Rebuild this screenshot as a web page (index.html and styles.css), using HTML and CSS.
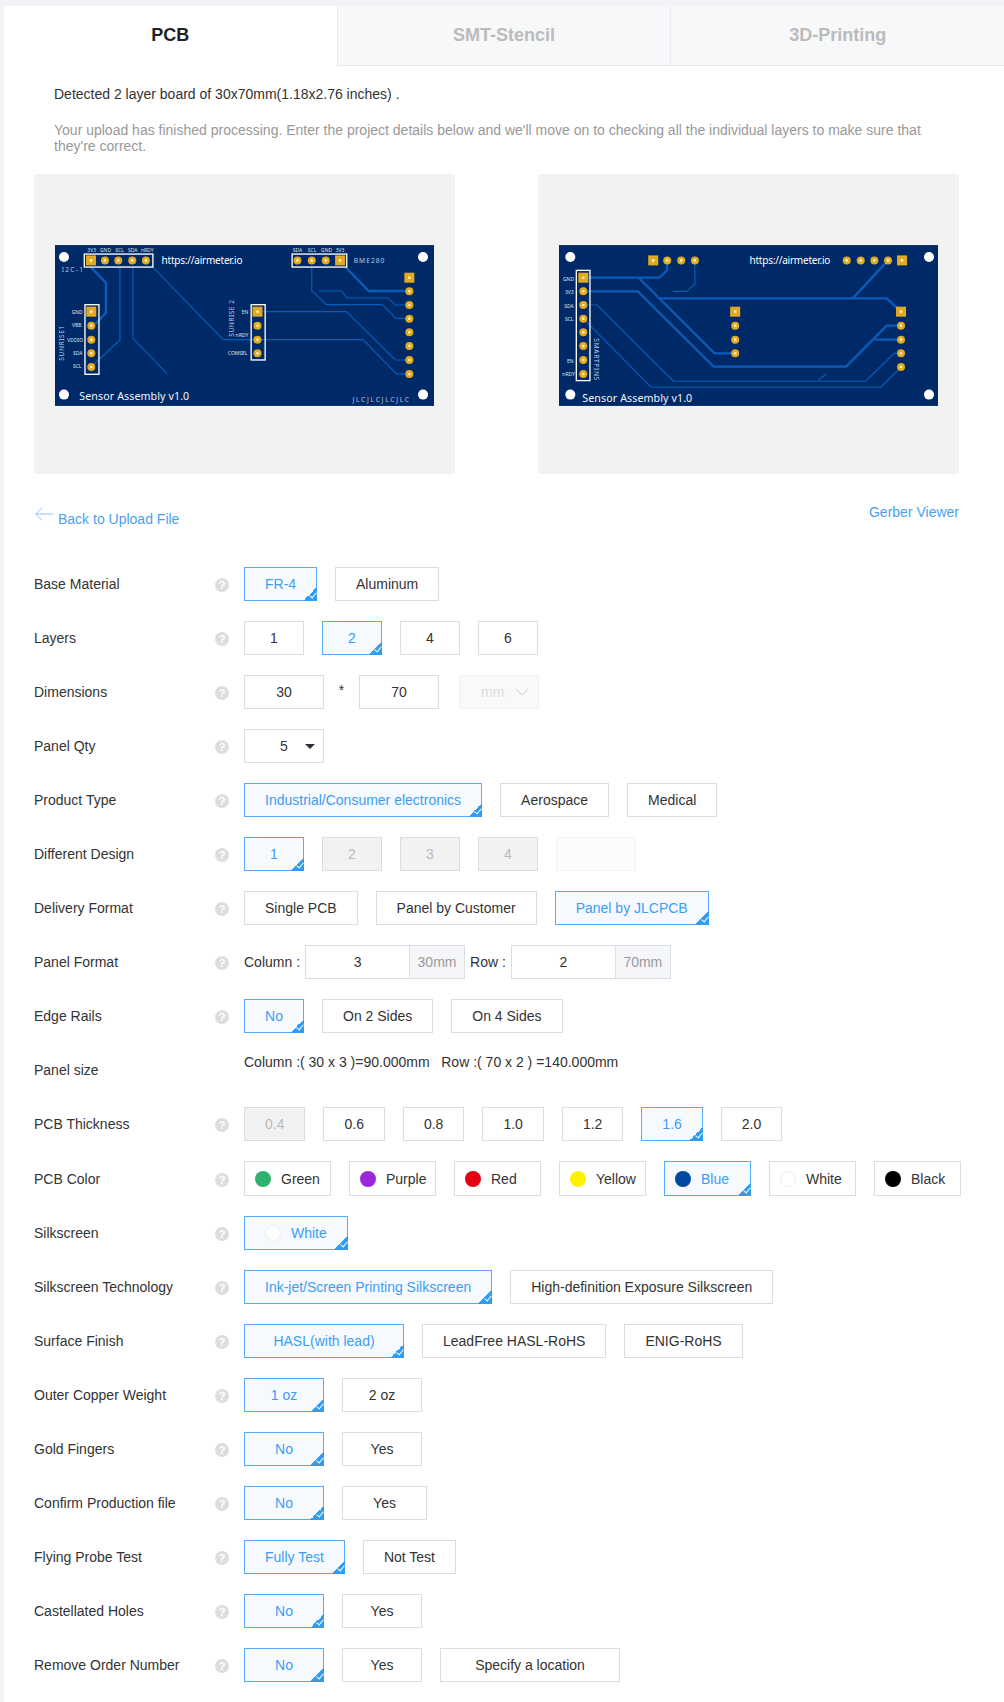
FILE: index.html
```html
<!DOCTYPE html>
<html lang="en">
<head>
  <meta charset="UTF-8" />
  <title>PCB Order</title>
  <link rel="stylesheet" href="styles.css">
</head>
<body>
  <div class="page">
    <div class="tabs">
      <div class="tab active">PCB</div>
      <div class="tab">SMT-Stencil</div>
      <div class="tab">3D-Printing</div>
    </div>

    <div class="intro">
      <p class="detected">Detected 2 layer board of 30x70mm(1.18x2.76 inches) .</p>
      <p class="note">Your upload has finished processing. Enter the project details below and we'll move on to checking all the individual layers to make sure that they're correct.</p>
    </div>

    <div class="previews">
      <div class="preview">
        <svg class="board" viewBox="75 45 1138 483">
          <rect class="pcb" x="75" y="45" width="1138" height="483"/>
          <path class="trace" d="M183 112 L228 158 V248 L196 282 M948 112 L1017 183 H1139"/>
          <path class="trace-thin" d="M270 111 V330 L190 405 M309 111 V325 L412 432 M370 113 L580 329 H1000 L1100 432 H1139 M846 111 V182 L890 224 H1058 L1098 265 H1139 M868 183 H935 L952 204 H1075 L1097 225 H1139 M700 245 H950 L1097 390 H1139"/>
          <g class="hole">
            <circle cx="102" cy="81" r="15"/><circle cx="1180" cy="81" r="15"/>
            <circle cx="102" cy="494" r="15"/><circle cx="1180" cy="494" r="15"/>
          </g>
          <g class="silk">
            <rect x="163" y="72" width="206" height="39"/><rect x="787" y="72" width="164" height="39"/>
            <rect x="165" y="224" width="42" height="209"/><rect x="664" y="224" width="42" height="166"/>
          </g>
          <g class="pad">
            <rect x="168" y="76" width="30" height="30"/><rect x="916" y="76" width="30" height="30"/>
            <rect x="169" y="230" width="30" height="30"/><rect x="668" y="230" width="30" height="30"/>
            <rect x="1124" y="128" width="30" height="30"/>
            <circle cx="225" cy="91" r="12"/><circle cx="265" cy="91" r="12"/><circle cx="307" cy="91" r="12"/><circle cx="348" cy="91" r="12"/>
            <circle cx="803" cy="91" r="12"/><circle cx="846" cy="91" r="12"/><circle cx="888" cy="91" r="12"/>
            <circle cx="184" cy="287" r="12"/><circle cx="184" cy="329" r="12"/><circle cx="184" cy="370" r="12"/><circle cx="184" cy="411" r="12"/>
            <circle cx="683" cy="287" r="12"/><circle cx="683" cy="329" r="12"/><circle cx="683" cy="370" r="12"/>
            <circle cx="1139" cy="184" r="12"/><circle cx="1139" cy="225" r="12"/><circle cx="1139" cy="266" r="12"/><circle cx="1139" cy="307" r="12"/><circle cx="1139" cy="348" r="12"/><circle cx="1139" cy="390" r="12"/><circle cx="1139" cy="432" r="12"/>
          </g>
          <g class="drill">
            <circle cx="183" cy="91" r="4"/><circle cx="225" cy="91" r="4"/><circle cx="265" cy="91" r="4"/><circle cx="307" cy="91" r="4"/><circle cx="348" cy="91" r="4"/>
            <circle cx="803" cy="91" r="4"/><circle cx="846" cy="91" r="4"/><circle cx="888" cy="91" r="4"/><circle cx="931" cy="91" r="4"/>
            <circle cx="184" cy="245" r="4"/><circle cx="184" cy="287" r="4"/><circle cx="184" cy="329" r="4"/><circle cx="184" cy="370" r="4"/><circle cx="184" cy="411" r="4"/>
            <circle cx="683" cy="245" r="4"/><circle cx="683" cy="287" r="4"/><circle cx="683" cy="329" r="4"/><circle cx="683" cy="370" r="4"/>
            <circle cx="1139" cy="143" r="4"/><circle cx="1139" cy="184" r="4"/><circle cx="1139" cy="225" r="4"/><circle cx="1139" cy="266" r="4"/><circle cx="1139" cy="307" r="4"/><circle cx="1139" cy="348" r="4"/><circle cx="1139" cy="390" r="4"/><circle cx="1139" cy="432" r="4"/>
          </g>
          <g class="tiny">
            <text x="172" y="66">3V3</text><text x="210" y="66">GND</text><text x="256" y="66">SCL</text><text x="294" y="66">SDA</text><text x="333" y="66">nRDY</text>
            <text x="789" y="66">SDA</text><text x="834" y="66">SCL</text><text x="874" y="66">GND</text><text x="918" y="66">3V3</text>
            <text x="125" y="251">GND</text><text x="126" y="292">VBB</text><text x="112" y="335">VDDIO</text><text x="129" y="376">SDA</text><text x="129" y="415">SCL</text>
            <text x="636" y="253">EN</text><text x="618" y="321">nRDY</text><text x="594" y="375">COMSEL</text>
          </g>
          <text class="url" x="395" y="102" textLength="243">https://airmeter.io</text>
          <text class="ref" x="972" y="100" textLength="92">BME280</text>
          <text class="ref" x="95" y="127" textLength="64">I2C-1</text>
          <text class="ref" transform="translate(103 392) rotate(-90)" textLength="105">SUNRISE1</text>
          <text class="ref" transform="translate(612 320) rotate(-90)" textLength="110">SUNRISE 2</text>
          <text class="title" x="148" y="511" textLength="330">Sensor Assembly v1.0</text>
          <text class="ref" x="968" y="515" textLength="170">JLCJLCJLCJLC</text>
        </svg>
      </div>
      <div class="preview">
        <svg class="board" viewBox="26 45 1138 483">
          <rect class="pcb" x="26" y="45" width="1138" height="483"/>
          <path class="trace" d="M99 143 H328 L351 120 V91 M265 143 L493 370 H555 M99 184 H263 L490 410 H888 L1010 287 H1053 M975 329 H1053 M330 205 H1010 L1053 245 M908 205 L1014 91"/>
          <path class="trace-thin" d="M434 91 V162 L410 184 H368 M99 225 H140 L370 454 H947 L1032 370 H1053 M99 266 L303 472 H992 L1053 411 M805 450 L828 432"/>
          <g class="hole">
            <circle cx="60" cy="81" r="15"/><circle cx="1137" cy="81" r="15"/>
            <circle cx="60" cy="494" r="15"/><circle cx="1137" cy="494" r="15"/>
          </g>
          <g class="silk"><rect x="78" y="121" width="41" height="331"/></g>
          <g class="pad">
            <rect x="294" y="76" width="30" height="30"/><rect x="1041" y="76" width="30" height="30"/>
            <rect x="84" y="128" width="30" height="30"/><rect x="540" y="230" width="30" height="30"/><rect x="1038" y="230" width="30" height="30"/>
            <circle cx="351" cy="91" r="12"/><circle cx="393" cy="91" r="12"/><circle cx="434" cy="91" r="12"/>
            <circle cx="890" cy="91" r="12"/><circle cx="932" cy="91" r="12"/><circle cx="973" cy="91" r="12"/><circle cx="1014" cy="91" r="12"/>
            <circle cx="99" cy="184" r="12"/><circle cx="99" cy="225" r="12"/><circle cx="99" cy="266" r="12"/><circle cx="99" cy="307" r="12"/><circle cx="99" cy="348" r="12"/><circle cx="99" cy="390" r="12"/><circle cx="99" cy="432" r="12"/>
            <circle cx="555" cy="287" r="12"/><circle cx="555" cy="329" r="12"/><circle cx="555" cy="370" r="12"/>
            <circle cx="1053" cy="287" r="12"/><circle cx="1053" cy="329" r="12"/><circle cx="1053" cy="370" r="12"/><circle cx="1053" cy="411" r="12"/>
          </g>
          <g class="drill">
            <circle cx="309" cy="91" r="4"/><circle cx="351" cy="91" r="4"/><circle cx="393" cy="91" r="4"/><circle cx="434" cy="91" r="4"/>
            <circle cx="890" cy="91" r="4"/><circle cx="932" cy="91" r="4"/><circle cx="973" cy="91" r="4"/><circle cx="1014" cy="91" r="4"/><circle cx="1056" cy="91" r="4"/>
            <circle cx="99" cy="143" r="4"/><circle cx="99" cy="184" r="4"/><circle cx="99" cy="225" r="4"/><circle cx="99" cy="266" r="4"/><circle cx="99" cy="307" r="4"/><circle cx="99" cy="348" r="4"/><circle cx="99" cy="390" r="4"/><circle cx="99" cy="432" r="4"/>
            <circle cx="555" cy="245" r="4"/><circle cx="555" cy="287" r="4"/><circle cx="555" cy="329" r="4"/><circle cx="555" cy="370" r="4"/>
            <circle cx="1053" cy="245" r="4"/><circle cx="1053" cy="287" r="4"/><circle cx="1053" cy="329" r="4"/><circle cx="1053" cy="370" r="4"/><circle cx="1053" cy="411" r="4"/>
          </g>
          <g class="tiny">
            <text x="38" y="153">GND</text><text x="44" y="191">3V3</text><text x="42" y="233">SDA</text><text x="44" y="274">SCL</text><text x="50" y="400">EN</text><text x="36" y="438">nRDY</text>
          </g>
          <text class="url" x="598" y="102" textLength="243">https://airmeter.io</text>
          <text class="ref" transform="translate(130 325) rotate(90)" textLength="126">SMARTPINS</text>
          <text class="title" x="96" y="515" textLength="330">Sensor Assembly v1.0</text>
        </svg>
      </div>
    </div>

    <div class="links">
      <a class="back">
        <svg class="back-arrow" width="18" height="14" viewBox="0 0 18 14"><path d="M7 0.5 L0.8 7 L7 13.5 M1 7 H18"/></svg>
        <span>Back to Upload File</span>
      </a>
      <a class="gerber">Gerber Viewer</a>
    </div>

    <div class="form">
      <div class="row">
        <label>Base Material</label><i class="help">?</i>
        <div class="opts"><span class="opt on w73">FR-4</span><span class="opt">Aluminum</span></div>
      </div>
      <div class="row">
        <label>Layers</label><i class="help">?</i>
        <div class="opts"><span class="opt">1</span><span class="opt on">2</span><span class="opt">4</span><span class="opt">6</span></div>
      </div>
      <div class="row">
        <label>Dimensions</label><i class="help">?</i>
        <div class="opts dims">
          <span class="opt w80">30</span><span class="times">*</span><span class="opt w80">70</span>
          <span class="unit">mm<svg width="12" height="7" viewBox="0 0 12 7"><path d="M0.5 0.5 L6 6 L11.5 0.5"/></svg></span>
        </div>
      </div>
      <div class="row">
        <label>Panel Qty</label><i class="help">?</i>
        <div class="opts"><span class="opt w80 select">5</span></div>
      </div>
      <div class="row">
        <label>Product Type</label><i class="help">?</i>
        <div class="opts"><span class="opt on">Industrial/Consumer electronics</span><span class="opt">Aerospace</span><span class="opt">Medical</span></div>
      </div>
      <div class="row">
        <label>Different Design</label><i class="help">?</i>
        <div class="opts"><span class="opt on">1</span><span class="opt off">2</span><span class="opt off">3</span><span class="opt off">4</span><span class="opt blank"></span></div>
      </div>
      <div class="row">
        <label>Delivery Format</label><i class="help">?</i>
        <div class="opts"><span class="opt">Single PCB</span><span class="opt">Panel by Customer</span><span class="opt on">Panel by JLCPCB</span></div>
      </div>
      <div class="row">
        <label>Panel Format</label><i class="help">?</i>
        <div class="panel-format">
          <span>Column :</span>
          <span class="field"><span class="num">3</span><span class="addon">30mm</span></span>
          <span>Row :</span>
          <span class="field"><span class="num">2</span><span class="addon">70mm</span></span>
        </div>
      </div>
      <div class="row">
        <label>Edge Rails</label><i class="help">?</i>
        <div class="opts"><span class="opt on">No</span><span class="opt">On 2 Sides</span><span class="opt">On 4 Sides</span></div>
      </div>
      <div class="row">
        <label>Panel size</label>
        <div class="panel-size">Column :( 30 x 3 )=90.000mm&nbsp;&nbsp; Row :( 70 x 2 ) =140.000mm</div>
      </div>
      <div class="row">
        <label>PCB Thickness</label><i class="help">?</i>
        <div class="opts"><span class="opt off">0.4</span><span class="opt">0.6</span><span class="opt">0.8</span><span class="opt">1.0</span><span class="opt">1.2</span><span class="opt on">1.6</span><span class="opt">2.0</span></div>
      </div>
      <div class="row tall">
        <label>PCB Color</label><i class="help">?</i>
        <div class="opts">
          <span class="opt color"><b class="dot green"></b>Green</span>
          <span class="opt color"><b class="dot purple"></b>Purple</span>
          <span class="opt color"><b class="dot red"></b>Red</span>
          <span class="opt color"><b class="dot yellow"></b>Yellow</span>
          <span class="opt color on"><b class="dot blue"></b>Blue</span>
          <span class="opt color"><b class="dot white"></b>White</span>
          <span class="opt color"><b class="dot black"></b>Black</span>
        </div>
      </div>
      <div class="row">
        <label>Silkscreen</label><i class="help">?</i>
        <div class="opts"><span class="opt color silk-white on"><b class="dot white"></b>White</span></div>
      </div>
      <div class="row">
        <label>Silkscreen Technology</label><i class="help">?</i>
        <div class="opts"><span class="opt on">Ink-jet/Screen Printing Silkscreen</span><span class="opt">High-definition Exposure Silkscreen</span></div>
      </div>
      <div class="row">
        <label>Surface Finish</label><i class="help">?</i>
        <div class="opts"><span class="opt on w160">HASL(with lead)</span><span class="opt">LeadFree HASL-RoHS</span><span class="opt">ENIG-RoHS</span></div>
      </div>
      <div class="row">
        <label>Outer Copper Weight</label><i class="help">?</i>
        <div class="opts"><span class="opt on w80">1 oz</span><span class="opt w80">2 oz</span></div>
      </div>
      <div class="row">
        <label>Gold Fingers</label><i class="help">?</i>
        <div class="opts"><span class="opt on w80">No</span><span class="opt w80">Yes</span></div>
      </div>
      <div class="row">
        <label>Confirm Production file</label><i class="help">?</i>
        <div class="opts"><span class="opt on w80">No</span><span class="opt w85">Yes</span></div>
      </div>
      <div class="row">
        <label>Flying Probe Test</label><i class="help">?</i>
        <div class="opts"><span class="opt on">Fully Test</span><span class="opt">Not Test</span></div>
      </div>
      <div class="row">
        <label>Castellated Holes</label><i class="help">?</i>
        <div class="opts"><span class="opt on w80">No</span><span class="opt w80">Yes</span></div>
      </div>
      <div class="row">
        <label>Remove Order Number</label><i class="help">?</i>
        <div class="opts"><span class="opt on w80">No</span><span class="opt w80">Yes</span><span class="opt w180">Specify a location</span></div>
      </div>
    </div>
  </div>
</body>
</html>
```

FILE: styles.css
```css
body {
  margin: 0;
  font-family: "Liberation Sans", Arial, sans-serif;
  font-size: 14px;
  color: #333;
  background-color: #f2f3f7;
}

.page {
  margin: 6px 0 0 4px;
  background-color: #fff;
  height: 1696px;
}

/* tabs */
.tabs {
  display: flex;
  height: 60px;
}

.tab {
  flex: 1;
  line-height: 58px;
  text-align: center;
  font-size: 18px;
  font-weight: bold;
  color: #bbb;
  background-color: #f7f8fa;
  border-left: 1px solid #e8eaee;
  border-bottom: 1px solid #e3e6ea;
}

.tab.active {
  color: #222;
  background-color: #fff;
  border: none;
}

/* intro text */
.intro {
  padding: 20px 44px 0 50px;
  line-height: 16px;
}

.intro p {
  margin: 0;
}

.detected {
  color: #333;
}

.intro .note {
  margin-top: 20px;
  color: #999;
}

/* board previews */
.previews {
  display: flex;
  justify-content: space-between;
  margin: 20px 45px 0 30px;
}

.preview {
  width: 421px;
  height: 300px;
  padding-top: 71px;
  box-sizing: border-box;
  display: flex;
  justify-content: center;
  background-color: #f2f2f2;
  border-radius: 3px;
}

.board {
  width: 379px;
  height: 161px;
}

.pcb { fill: #002a67; }
.trace { fill: none; stroke: #0a5cb8; stroke-width: 7; }
.trace-thin { fill: none; stroke: #0a5cb8; stroke-width: 3.5; }
.hole { fill: #fff; }
.silk { fill: none; stroke: #fff; stroke-width: 4; }
.pad { fill: #e2aa1e; }
.drill { fill: #fff3d0; }
.tiny { fill: #dfe6f2; font: 15px "Noto Sans", sans-serif; }
.url { fill: #fff; font: 30px "Noto Sans", sans-serif; }
.ref { fill: #b9c8e0; font: 20px "Noto Sans", sans-serif; }
.title { fill: #f2f5fa; font: 32px "Noto Sans", sans-serif; }

/* links */
.links {
  display: flex;
  justify-content: space-between;
  height: 63px;
  margin: 30px 45px 0 31px;
  line-height: 16px;
  color: #4a9ff5;
}

.back {
  display: flex;
  gap: 5px;
  margin-top: 3px;
}

.back span {
  margin-top: 4px;
}

.back-arrow {
  fill: none;
  stroke: #8fc4fa;
  stroke-width: 1;
}

/* form rows */
.form {
  padding-left: 30px;
}

.row {
  display: grid;
  grid-template-columns: 181px 29px 1fr;
  align-items: center;
  min-height: 34px;
  margin-bottom: 20px;
}

.row.tall {
  min-height: 35px;
}

.row label {
  color: #333;
}

.help {
  width: 14px;
  height: 14px;
  margin-top: 2px;
  border-radius: 50%;
  background-color: #ddd;
  color: #fff;
  font-size: 11px;
  font-weight: bold;
  font-style: normal;
  line-height: 14px;
  text-align: center;
}

.opts {
  display: flex;
  gap: 18px;
}

.opt {
  position: relative;
  box-sizing: border-box;
  min-width: 60px;
  height: 34px;
  padding: 0 20px;
  line-height: 32px;
  text-align: center;
  white-space: nowrap;
  border: 1px solid #ddd;
  background-color: #fff;
}

.w73 { width: 73px; }
.w80 { width: 80px; }
.w85 { width: 85px; }
.w160 { width: 160px; }
.w180 { width: 180px; }

.opt.on {
  color: #3c9df5;
  background-color: #f6faff;
  border-color: #58aafa;
}

/* selected corner with tick */
.opt.on::after {
  content: "";
  position: absolute;
  right: -1px;
  bottom: -1px;
  width: 14px;
  height: 14px;
  background: linear-gradient(135deg, transparent 50%, #2f9cf6 50%);
}

.opt.on::before {
  content: "";
  position: absolute;
  z-index: 1;
  right: 1px;
  bottom: 2px;
  width: 3px;
  height: 6px;
  border-right: 1px solid #fff;
  border-bottom: 1px solid #fff;
  transform: rotate(40deg);
}

.opt.off {
  color: #bbb;
  background-color: #f2f2f2;
}

.opt.blank {
  width: 80px;
  background-color: #fcfcfd;
  border-color: #f3f4f6;
}

.opts .opt:has(+ .opt.flying) {
  margin-right: 5px;
}

/* dimensions */
.dims {
  gap: 0;
}

.times {
  width: 35px;
  line-height: 30px;
  text-align: center;
}

.unit {
  display: flex;
  align-items: center;
  gap: 12px;
  box-sizing: border-box;
  width: 80px;
  height: 34px;
  margin-left: 20px;
  padding-left: 21px;
  color: #dcdcdc;
  background-color: #f8f9fb;
  border: 1px solid #f0f1f4;
}

.unit svg {
  fill: none;
  stroke: #ccc;
}

.select {
  padding: 0;
}

.select::after {
  content: "";
  position: absolute;
  top: 14px;
  right: 8px;
  border-top: 5px solid #2c3040;
  border-left: 5px solid transparent;
  border-right: 5px solid transparent;
}

/* panel format */
.panel-format {
  display: flex;
  align-items: center;
  gap: 5px;
}

.field {
  display: flex;
  box-sizing: border-box;
  width: 160px;
  height: 34px;
  line-height: 32px;
  border: 1px solid #dcdee6;
}

.num {
  flex: 1;
  text-align: center;
}

.addon {
  width: 54px;
  text-align: center;
  color: #999;
  background-color: #f5f6fa;
  border-left: 1px solid #dcdee6;
}

.panel-size {
  grid-column: 3;
  align-self: start;
  margin-top: 1px;
  line-height: 16px;
}

/* colour options */
.color {
  display: flex;
  align-items: center;
  gap: 10px;
  width: 87px;
  height: 35px;
  padding: 0 0 0 10px;
}

.silk-white {
  width: 104px;
  height: 34px;
  padding-left: 20px;
}

.dot {
  flex: none;
  width: 16px;
  height: 16px;
  border-radius: 50%;
}

.green { background-color: #30b06e; }
.purple { background-color: #9b27d9; }
.red { background-color: #e60012; }
.yellow { background-color: #fff100; }
.blue { background-color: #00479d; }
.black { background-color: #000; }
.white { box-sizing: border-box; background-color: #fff; border: 1px solid #eee; }
```
